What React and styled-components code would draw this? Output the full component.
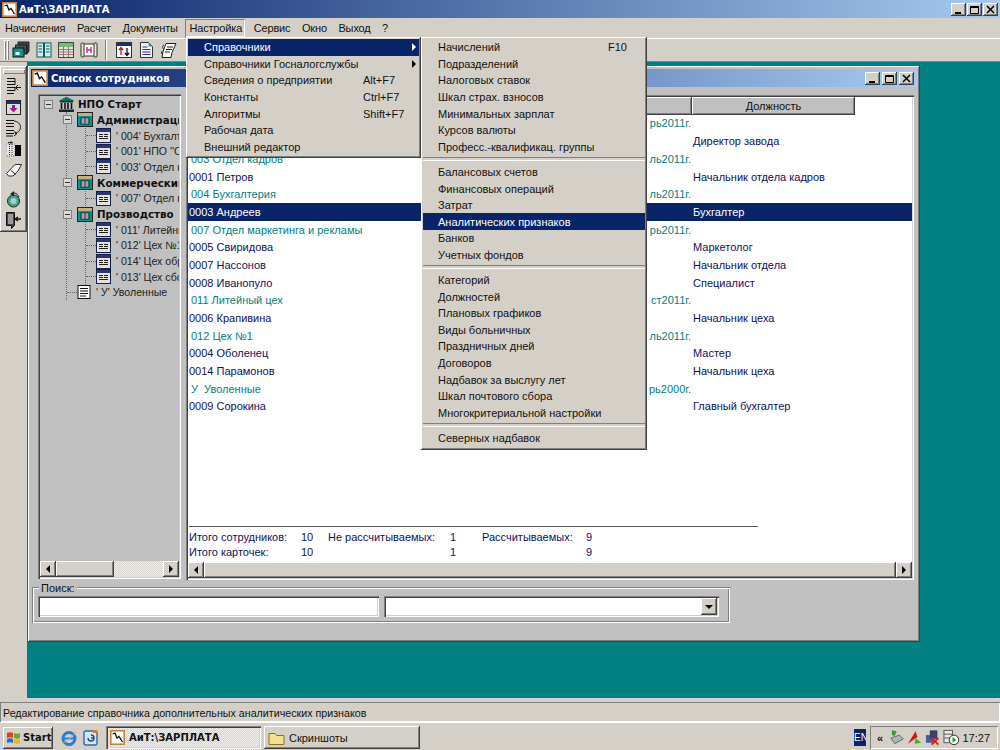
import React from "react";
import styled, { createGlobalStyle, css } from "styled-components";

const Global = createGlobalStyle`
  html, body { margin: 0; padding: 0; background: #d4d0c8; }
  * { box-sizing: border-box; }
`;

const raised = css`
  box-shadow: inset -1px -1px 0 #404040, inset 1px 1px 0 #ffffff, inset -2px -2px 0 #808080;
`;
const sunken = css`
  box-shadow: inset 1px 1px 0 #808080, inset 2px 2px 0 #404040, inset -1px -1px 0 #ffffff, inset -2px -2px 0 #d4d0c8;
`;

const Screen = styled.div`
  position: relative;
  width: 1000px;
  height: 750px;
  overflow: hidden;
  display: flex;
  flex-direction: column;
  background: #d4d0c8;
  color: #111;
  font: 11px "Liberation Sans", Arial, sans-serif;
`;

const AppTitle = styled.div`
  height: 18px;
  flex: none;
  display: flex;
  align-items: center;
  padding: 0 2px;
  gap: 2px;
  background: linear-gradient(90deg, #0a246a, #a6caf0);
  color: #fff;
  font: bold 10px "DejaVu Sans", sans-serif;
`;
const Grow = styled.div`
  flex: 1;
`;
const CapButtons = styled.div`
  display: flex;
  gap: ${(p) => p.$gap || 1}px;
`;
const CapBtn = styled.div`
  width: 15px;
  height: 13px;
  background: #d4d0c8;
  ${raised};
  display: flex;
  align-items: center;
  justify-content: center;
`;

const MenuBar = styled.div`
  height: 20px;
  flex: none;
  display: flex;
  align-items: center;
  gap: 11.5px;
  padding-left: 5px;
  letter-spacing: -0.15px;
`;
const MenuTop = styled.div`
  line-height: 18px;
  ${(p) =>
    p.$active &&
    css`
      margin: 0 -3px 0 -4px;
      padding: 0 3px 0 4px;
      box-shadow: inset 1px 1px 0 #808080, inset -1px -1px 0 #fff;
    `}
`;

const ToolBar = styled.div`
  height: 24px;
  flex: none;
  display: flex;
  align-items: center;
  padding-left: 4px;
  border-top: 1px solid #fff;
  border-bottom: 1px solid #808080;
`;
const Grip = styled.div`
  width: 2px;
  height: 20px;
  margin-right: 1px;
  background: #d4d0c8;
  box-shadow: inset 1px 1px 0 #fff, inset -1px -1px 0 #808080;
`;
const ToolIcon = styled.div`
  width: 22.6px;
  height: 20px;
  display: flex;
  align-items: center;
  justify-content: center;
`;
const ToolSep = styled.div`
  width: 2px;
  height: 20px;
  margin: 0 5px;
  border-left: 1px solid #808080;
  border-right: 1px solid #fff;
`;

const Main = styled.div`
  flex: 1;
  min-height: 0;
  display: flex;
`;
const SideBar = styled.div`
  width: 27px;
  flex: none;
  padding-top: 4px;
`;
const SideTools = styled.div`
  height: 166px;
  padding-top: 3px;
  display: flex;
  flex-direction: column;
  align-items: center;
  gap: 1px;
  ${raised};
`;
const SideGrip = styled.div`
  width: 22px;
  height: 5px;
  margin-bottom: 1px;
  box-shadow: inset 1px 1px 0 #fff, inset -1px -1px 0 #808080;
`;
const SideIcon = styled.div`
  height: 20px;
  margin-top: ${(p) => p.$mt || 0}px;
  display: flex;
  align-items: center;
  justify-content: center;
`;
const Desk = styled.div`
  flex: 1;
  background: #008080;
  padding: 4px 0 0 1px;
  border-bottom: 2px solid #c8d8d4;
`;

const Win = styled.div`
  width: 892px;
  height: 576px;
  padding: 3px;
  background: #c0c0c0;
  ${raised};
`;
const WinTitle = styled.div`
  height: 18px;
  display: flex;
  align-items: center;
  padding: 0 3px 0 1px;
  gap: 3px;
  background: linear-gradient(90deg, #0a246a, #a6caf0);
  color: #fff;
  font: bold 10px "DejaVu Sans", sans-serif;
`;
const WinBody = styled.div`
  display: flex;
  gap: 5px;
  padding: 7px 0 0 7px;
`;

const TreePanel = styled.div`
  width: 143px;
  height: 485px;
  padding: 2px;
  display: flex;
  flex-direction: column;
  ${sunken};
`;
const TreeScroll = styled.div`
  flex: 1;
  min-height: 0;
  overflow: hidden;
  padding-top: 0.4px;
`;
const TreeRow = styled.div`
  height: 15.7px;
  display: flex;
  align-items: center;
  white-space: nowrap;
  font: ${(p) => (p.$strong ? 'bold 10.3px "DejaVu Sans", sans-serif' : '10.6px "Liberation Sans", sans-serif')};
  color: ${(p) => (p.$strong ? "#111" : "#222")};
  padding-left: ${(p) => p.$pad || 0}px;
`;
const Branch = styled.div`
  margin-left: ${(p) => p.$at}px;
  border-left: 1px dotted #666;
`;
const Toggle = styled.span`
  flex: none;
  width: 9px;
  height: 9px;
  margin-left: ${(p) => p.$left || 0}px;
  margin-right: ${(p) => p.$right || 5}px;
  background: #d8d8d8;
  border: 1px solid #808080;
  display: flex;
  align-items: center;
  justify-content: center;
  &::before {
    content: "";
    width: 5px;
    height: 1px;
    background: #333;
  }
`;
const Dots = styled.span`
  flex: none;
  width: ${(p) => p.$w}px;
  border-top: 1px dotted #666;
`;
const IconGap = styled.span`
  flex: none;
  display: flex;
  margin-right: ${(p) => p.$r}px;
`;

const HScroll = styled.div`
  height: 16px;
  flex: none;
  display: flex;
  background: repeating-conic-gradient(#d4d0c8 0 25%, #f4f2ee 0 50%) 0 0 / 2px 2px;
`;
const ScrollBtn = styled.div`
  width: 16px;
  flex: none;
  background: #d4d0c8;
  ${raised};
  display: flex;
  align-items: center;
  justify-content: center;
  &::before {
    content: "";
    border-style: solid;
    border-width: 4px 0 4px 4px;
    border-color: transparent transparent transparent #000;
    ${(p) => p.$left && "transform: scaleX(-1);"}
  }
`;
const Thumb = styled.div`
  background: #d4d0c8;
  ${raised};
  ${(p) => (p.$w ? `width: ${p.$w}px; flex: none;` : "flex: 1;")}
`;
const Track = styled.div`
  flex: 1;
`;

const ListPanel = styled.div`
  width: 728px;
  height: 485px;
  margin-top: 1px;
  padding: 2px;
  display: flex;
  flex-direction: column;
  background: #fff;
  ${sunken};
`;
const Head = styled.div`
  height: 18px;
  flex: none;
  display: flex;
`;
const HeadCell = styled.div`
  width: ${(p) => p.$w}px;
  background: #c0c0c0;
  ${raised};
  display: flex;
  align-items: center;
  justify-content: center;
  color: #111;
`;
const Rows = styled.div`
  flex: 1;
  min-height: 0;
  margin-top: -0.4px;
`;
const Row = styled.div`
  height: 17.7px;
  display: grid;
  grid-template-columns: 1fr auto 219px;
  align-items: center;
  column-gap: 2px;
  white-space: pre;
  padding-left: 1px;
  color: ${(p) => (p.$sel ? "#fff" : p.$group ? "#008080" : "#101060")};
  background: ${(p) => (p.$sel ? "#0a246a" : "transparent")};
`;
const RowName = styled.span`
  padding-left: ${(p) => (p.$group ? 2 : 0)}px;
`;
const Totals = styled.div`
  flex: none;
  height: 36px;
  width: 569px;
  margin-left: 1px;
  padding-top: 2px;
  border-top: 1px solid #555;
  display: grid;
  grid-template-columns: 112px 27px 122px 32px 104px 1fr;
  grid-auto-rows: 15px;
  align-items: center;
  color: #101060;
`;

const SearchBox = styled.fieldset`
  width: 698px;
  height: 36px;
  margin: 7px 0 0 1px;
  padding: 0 9px 0 6px;
  border: none;
  box-shadow: inset 1px 1px 0 #808080, inset 2px 2px 0 #fff, inset -1px -1px 0 #fff, inset -2px -2px 0 #808080;
  display: flex;
  gap: 5px;
  position: relative;
`;
const SearchLabel = styled.div`
  position: absolute;
  left: 7px;
  top: -5px;
  padding: 0 2px;
  background: #c0c0c0;
  line-height: 12px;
`;
const SearchRow = styled.div`
  margin-top: 9px;
  display: flex;
  gap: 5px;
`;
const Field = styled.div`
  width: ${(p) => p.$w}px;
  height: 21px;
  background: #fff;
  ${sunken};
  display: flex;
  justify-content: flex-end;
  padding: 2px;
`;
const ComboBtn = styled.div`
  width: 16px;
  background: #d4d0c8;
  ${raised};
  display: flex;
  align-items: center;
  justify-content: center;
  &::before {
    content: "";
    border-style: solid;
    border-width: 4px 4px 0 4px;
    border-color: #000 transparent transparent transparent;
  }
`;

const StatusBar = styled.div`
  height: 20px;
  flex: none;
  margin-top: 2px;
  padding: 1px 0 0 3px;
  display: flex;
  align-items: center;
  font-size: 10.7px;
  box-shadow: inset 1px 1px 0 #808080, inset -1px -1px 0 #fff;
`;
const TaskBar = styled.div`
  height: 28px;
  flex: none;
  display: flex;
  align-items: center;
  padding: 2px 2px 0 3px;
  border-top: 1px solid #fff;
`;
const StartBtn = styled.div`
  width: 50px;
  height: 22px;
  display: flex;
  align-items: center;
  gap: 2px;
  padding-left: 3px;
  margin-right: 7px;
  font: bold 10px "DejaVu Sans", sans-serif;
  ${raised};
`;
const Quick = styled.div`
  display: flex;
  gap: 4px;
  margin-right: 7px;
`;
const TaskBtn = styled.div`
  width: ${(p) => p.$w}px;
  height: 23px;
  margin-right: 3px;
  display: flex;
  align-items: center;
  gap: 4px;
  padding-left: 4px;
  ${(p) =>
    p.$on
      ? css`
          font: bold 10px "DejaVu Sans", sans-serif;
          background: repeating-conic-gradient(#d4d0c8 0 25%, #f4f2ee 0 50%) 0 0 / 2px 2px;
          ${sunken};
        `
      : raised}
`;
const Lang = styled.div`
  width: 12px;
  height: 17px;
  margin-right: 4px;
  background: #0a246a;
  color: #fff;
  font-size: 10px;
  display: flex;
  align-items: center;
  overflow: hidden;
`;
const Tray = styled.div`
  width: 128px;
  height: 23px;
  display: flex;
  align-items: center;
  padding: 0 8px 0 7px;
  gap: 3px;
  box-shadow: inset 1px 1px 0 #808080, inset -1px -1px 0 #fff;
`;
const Chevron = styled.span`
  font-weight: bold;
  width: 9px;
`;
const Clock = styled.span`
  margin-left: auto;
  font-size: 11px;
`;

const Dropdown = styled.div`
  position: absolute;
  top: 37px;
  left: ${(p) => p.$left}px;
  width: ${(p) => p.$w}px;
  padding: 2px 2px ${(p) => p.$pb}px;
  background: #d4d0c8;
  ${raised};
  z-index: 5;
`;
const Item = styled.div`
  height: 16.6px;
  display: flex;
  align-items: center;
  padding-left: ${(p) => p.$pad}px;
  position: relative;
  background: ${(p) => (p.$sel ? "#0a246a" : "transparent")};
  color: ${(p) => (p.$sel ? "#fff" : "#111")};
`;
const Shortcut = styled.span`
  position: absolute;
  left: ${(p) => p.$at}px;
`;
const Arrow = styled.span`
  position: absolute;
  right: 3px;
  border-style: solid;
  border-width: 4px 0 4px 4px;
  border-color: transparent transparent transparent ${(p) => (p.$sel ? "#fff" : "#000")};
`;
const Divider = styled.div`
  height: 8.5px;
  display: flex;
  align-items: center;
  &::before {
    content: "";
    flex: 1;
    height: 2px;
    border-top: 1px solid #808080;
    border-bottom: 1px solid #fff;
  }
`;

/* ---------- drawings ---------- */
const AppIcon = ({ s = 15 }) => (
  <svg width={s} height={s} viewBox="0 0 15 15">
    <rect x="0.8" y="0.8" width="13.4" height="13.4" fill="#fff" stroke="#c8843c" strokeWidth="1.6" />
    <path d="M2.5 4 L5 3 L7 8 L9 6.5 L12.5 12" fill="none" stroke="#111" strokeWidth="1.3" />
  </svg>
);
const Bank = () => (
  <svg width="17" height="17" viewBox="0 0 17 17">
    <path d="M8.5 1 L16 5 L1 5 Z" fill="#0d6b6b" stroke="#073" strokeWidth=".5" />
    <rect x="2" y="5" width="13" height="1.5" fill="#222" />
    <path d="M3.5 7v6M7 7v6M10 7v6M13.5 7v6" stroke="#111" strokeWidth="1.6" />
    <rect x="1" y="13.5" width="15" height="2.5" fill="#222" />
  </svg>
);
const DeptIcon = () => (
  <svg width="16" height="15" viewBox="0 0 16 15">
    <rect x="0.5" y="0.5" width="15" height="14" fill="#109090" stroke="#222" />
    <rect x="1" y="1" width="14" height="3" fill="#c8b078" />
    <rect x="4" y="6" width="8" height="6" fill="#fff" stroke="#123" />
    <path d="M4 8h8M4 10h8M8 6v6" stroke="#123" strokeWidth=".8" />
  </svg>
);
const DocIcon = () => (
  <svg width="15" height="15" viewBox="0 0 15 15">
    <rect x="0.5" y="0.5" width="14" height="14" fill="#e4e4dc" stroke="#15204a" />
    <rect x="1" y="1" width="13" height="3" fill="#283870" />
    <path d="M3 6.5h4M8 6.5h4M3 8.5h4M8 8.5h4M3 10.5h9" stroke="#222" />
  </svg>
);
const ListIcon = () => (
  <svg width="14" height="14" viewBox="0 0 14 14">
    <rect x="1" y="0.5" width="12" height="13" fill="#fff" stroke="#111" />
    <path d="M3 3.5h8M3 6h8M3 8.5h8M3 11h6" stroke="#111" />
  </svg>
);
const TB = {
  stack: (
    <svg width="18" height="18" viewBox="0 0 18 18">
      <path d="M6 1h11v9l-2 3V4H6z" fill="#444" stroke="#222" />
      <rect x="3.5" y="4" width="11" height="9" fill="#3a5a5a" stroke="#222" />
      <rect x="1" y="7" width="11" height="9" fill="#1f8a8a" stroke="#111" />
      <rect x="3.5" y="11" width="4" height="3" fill="#cfe" />
    </svg>
  ),
  book: (
    <svg width="16" height="16" viewBox="0 0 16 16">
      <rect x="1" y="1" width="6.5" height="14" fill="#d0eeee" stroke="#0a5a5a" />
      <rect x="8.5" y="1" width="6.5" height="14" fill="#d0eeee" stroke="#0a5a5a" />
      <path d="M2.5 4h3.5M2.5 7h3.5M2.5 10h3.5M10 4h3.5M10 7h3.5M10 10h3.5" stroke="#246" />
    </svg>
  ),
  sheet: (
    <svg width="16" height="16" viewBox="0 0 16 16">
      <rect x="0.5" y="0.5" width="15" height="15" fill="#e8e4dc" stroke="#444" />
      <rect x="1" y="1" width="14" height="4" fill="#7ab87a" />
      <path d="M1 7.5h14M1 10h14M1 12.5h14" stroke="#a07878" />
      <path d="M5.5 5v10M10.5 5v10" stroke="#807878" />
    </svg>
  ),
  scroll: (
    <svg width="18" height="16" viewBox="0 0 18 16">
      <rect x="3" y="2" width="12" height="12" fill="#fff" stroke="#333" />
      <rect x="1" y="1" width="3" height="14" rx="1" fill="#f0e8c8" stroke="#333" />
      <rect x="14" y="1" width="3" height="14" rx="1" fill="#f0e8c8" stroke="#333" />
      <path d="M7 5v6M11 5v6M7 8h4" stroke="#d0208a" strokeWidth="1.4" />
    </svg>
  ),
  sort: (
    <svg width="16" height="16" viewBox="0 0 16 16">
      <rect x="0.5" y="0.5" width="15" height="15" fill="#fff" stroke="#333" />
      <rect x="1" y="1" width="14" height="3" fill="#14308a" />
      <path d="M5 13V6M3 8l2-2.5L7 8" fill="none" stroke="#c01818" strokeWidth="1.3" />
      <path d="M11 6v7M9 11l2 2.5 2-2.5" fill="none" stroke="#111" strokeWidth="1.3" />
    </svg>
  ),
  page: (
    <svg width="15" height="16" viewBox="0 0 15 16">
      <path d="M1.5.5h8l4 4v11h-12z" fill="#f4f4f4" stroke="#333" />
      <path d="M9.5.5v4h4z" fill="#3a9a9a" />
      <path d="M3.5 5h5M3.5 7.5h8M3.5 10h8M3.5 12.5h8" stroke="#2a2a9a" strokeWidth="1.2" />
      <path d="M3.5 7.5h2M3.5 12.5h2" stroke="#c02070" strokeWidth="1.2" />
    </svg>
  ),
  note: (
    <svg width="17" height="17" viewBox="0 0 17 17">
      <path d="M6 1.5h10l-4 9-1 5H2l1-6z" fill="#fff" stroke="#222" />
      <path d="M7 5h6M6 7.5h6M5 10h5" stroke="#222" />
      <path d="M4 3c-2 1-2 3 0 4M2.5 9c-1.5 1-1 3 .5 4" fill="none" stroke="#222" />
    </svg>
  ),
};
const SIDE = [
  <svg key="a" width="16" height="18" viewBox="0 0 16 18">
    <path d="M1 1.5h8M1 4.5h8M1 7.5h8M1 10.5h8M1 13.5h8M1 16.5h7M9 1.5v6M9 10.5v3" stroke="#111" fill="none" />
    <path d="M10 10.5h5M12 8l-2.5 2.5L12 13" stroke="#111" fill="none" />
  </svg>,
  <svg key="b" width="15" height="15" viewBox="0 0 15 15">
    <rect x="0.5" y="0.5" width="14" height="14" fill="#cfe6cf" stroke="#222" />
    <rect x="1" y="1" width="13" height="3" fill="#14308a" />
    <path d="M6 5h3v3h2.5L7.5 12.5 3.5 8H6z" fill="#b01090" />
  </svg>,
  <svg key="c" width="17" height="18" viewBox="0 0 17 18">
    <path d="M1 1.5h8M1 4.5h8M1 7.5h8M1 11.5h8M1 14.5h8M1 17h7" stroke="#111" fill="none" />
    <path d="M9 2c8 1 9 10 1 12.5M9 12.5l3 2-3 2.5" stroke="#111" fill="none" />
  </svg>,
  <svg key="d" width="16" height="16" viewBox="0 0 16 16">
    <rect x="0" y="3" width="9" height="12" fill="#e4e4e4" stroke="#777" strokeDasharray="1 1" />
    <path d="M3.5 3v12M6 3v12" stroke="#333" strokeDasharray="1 1" />
    <rect x="9" y="4" width="6" height="11" fill="#000" />
    <path d="M5 0v3M7 1.5H2" stroke="#333" />
  </svg>,
  <svg key="e" width="18" height="14" viewBox="0 0 18 14">
    <path d="M1.5 10.5L10 1.5h6.5L13 8l-5 5H3.5z" fill="#f4f4f4" stroke="#333" />
    <path d="M6 7.5l5 4" stroke="#333" />
  </svg>,
  <svg key="f" width="15" height="18" viewBox="0 0 15 18">
    <circle cx="7.5" cy="11" r="6" fill="#3aa88a" stroke="#222" />
    <circle cx="7.5" cy="11" r="3" fill="#b8c8d0" />
    <path d="M4 4l4-3v5z" fill="#222" />
    <path d="M8 3c3 0 4 2 5 4" fill="none" stroke="#222" />
  </svg>,
  <svg key="g" width="17" height="18" viewBox="0 0 17 18">
    <path d="M1.5 1.5h8v13l-3 3v-3h-5z" fill="#444" stroke="#111" />
    <path d="M3 3h5v10H3z" fill="#999" />
    <path d="M16 8h-5M13 6l-3 2 3 2" stroke="#111" fill="none" strokeWidth="1.3" />
  </svg>,
];
const WinLogo = () => (
  <svg width="15" height="15" viewBox="0 0 15 15">
    <path d="M1 3c2-1 4-1 6 0v5c-2-1-4-1-6 0z" fill="#d8431e" />
    <path d="M8 3c2 1 4 1 6 0v5c-2 1-4 1-6 0z" fill="#6aa82a" />
    <path d="M1 9c2-1 4-1 6 0v4c-2-1-4-1-6 0z" fill="#2a6ad8" />
    <path d="M8 9c2 1 4 1 6 0v4c-2 1-4 1-6 0z" fill="#e8b818" />
  </svg>
);
const IeIcon = () => (
  <svg width="18" height="18" viewBox="0 0 18 18">
    <circle cx="9" cy="9.5" r="6" fill="none" stroke="#2a7ae0" strokeWidth="3" />
    <path d="M4 9.5h10" stroke="#2a7ae0" strokeWidth="2" />
    <path d="M2 14c3 0 10-6 14-11" stroke="#e8b818" fill="none" />
  </svg>
);
const DeskIcon = () => (
  <svg width="17" height="18" viewBox="0 0 17 18">
    <rect x="2" y="2" width="13" height="14" rx="2" fill="#d8e6f4" stroke="#2a6ab0" strokeWidth="1.4" />
    <path d="M6 9a3 3 0 1 0 3-3M9 9h3" fill="none" stroke="#1a4a9a" strokeWidth="1.4" />
    <rect x="11" y="1" width="4" height="3" fill="#e07818" />
  </svg>
);
const FolderIcon = () => (
  <svg width="17" height="14" viewBox="0 0 17 14">
    <path d="M1 2.5h6l1.5 2h7.5v9H1z" fill="#f4e08a" stroke="#8a7020" />
  </svg>
);
const TrayNet = () => (
  <svg width="16" height="17" viewBox="0 0 16 17">
    <path d="M3 1l5 1-2 5-3-1z" fill="#3a9a3a" />
    <path d="M2 9l9-3 4 4-9 5z" fill="#aab4b0" stroke="#333" strokeWidth=".6" />
  </svg>
);
const TrayRed = () => (
  <svg width="16" height="15" viewBox="0 0 16 15">
    <path d="M1 14L9 1l2 6z" fill="#e01010" />
    <path d="M9 8l6 5-7 1z" fill="#2ac02a" />
  </svg>
);
const TrayX = () => (
  <svg width="16" height="17" viewBox="0 0 16 17">
    <rect x="1" y="6" width="8" height="8" fill="#4a5a9a" />
    <rect x="5" y="1" width="8" height="9" fill="#39406a" />
    <path d="M7 9l7 7M14 9l-7 7" stroke="#e01818" strokeWidth="2" />
  </svg>
);
const TrayPlay = () => (
  <svg width="17" height="17" viewBox="0 0 17 17">
    <rect x="1" y="1" width="9" height="13" fill="#e8e8e8" stroke="#555" />
    <path d="M1 5h9M1 9h9" stroke="#555" />
    <circle cx="11.5" cy="11" r="5" fill="#fff" stroke="#222" />
    <path d="M10 8l4 3-4 3z" fill="#18a018" />
  </svg>
);

const Caption = ({ gap }) => (
  <CapButtons $gap={gap}>
    <CapBtn>
      <svg width="9" height="9" viewBox="0 0 9 9"><rect x="1" y="7" width="6" height="2" fill="#000" /></svg>
    </CapBtn>
    <CapBtn>
      <svg width="9" height="9" viewBox="0 0 9 9"><path d="M.5 1.5h8v7h-8zM.5 2.5h8" fill="none" stroke="#000" /></svg>
    </CapBtn>
    <CapBtn>
      <svg width="9" height="9" viewBox="0 0 9 9"><path d="M1 1l7 7M8 1l-7 7" stroke="#000" strokeWidth="1.5" /></svg>
    </CapBtn>
  </CapButtons>
);

/* ---------- data ---------- */
const topMenu = ["Начисления", "Расчет", "Документы", "Настройка", "Сервис", "Окно", "Выход", "?"];
const menu1 = [
  { t: "Справочники", arrow: true, sel: true },
  { t: "Справочники Госналогслужбы", arrow: true },
  { t: "Сведения о предприятии", k: "Alt+F7" },
  { t: "Константы", k: "Ctrl+F7" },
  { t: "Алгоритмы", k: "Shift+F7" },
  { t: "Рабочая дата" },
  { t: "Внешний редактор" },
];
const menu2 = [
  [{ t: "Начислений", k: "F10" }, { t: "Подразделений" }, { t: "Налоговых ставок" }, { t: "Шкал страх. взносов" }, { t: "Минимальных зарплат" }, { t: "Курсов валюты" }, { t: "Професс.-квалификац. группы" }],
  [{ t: "Балансовых счетов" }, { t: "Финансовых операций" }, { t: "Затрат" }, { t: "Аналитических признаков", sel: true }, { t: "Банков" }, { t: "Учетных фондов" }],
  [{ t: "Категорий" }, { t: "Должностей" }, { t: "Плановых графиков" }, { t: "Виды больничных" }, { t: "Праздничных дней" }, { t: "Договоров" }, { t: "Надбавок за выслугу лет" }, { t: "Шкал почтового сбора" }, { t: "Многокритериальной настройки" }],
  [{ t: "Северных надбавок" }],
];
const rows = [
  { date: "рь2011г.", group: true },
  { pos: "Директор завода" },
  { name: "003 Отдел кадров", date: "ль2011г.", group: true },
  { name: "0001 Петров", pos: "Начальник отдела кадров" },
  { name: "004 Бухгалтерия", date: "ль2011г.", group: true },
  { name: "0003 Андреев", pos: "Бухгалтер", sel: true },
  { name: "007 Отдел маркетинга и рекламы", date: "рь2011г.", group: true },
  { name: "0005 Свиридова", pos: "Маркетолог" },
  { name: "0007 Нассонов", pos: "Начальник отдела" },
  { name: "0008 Иванопуло", pos: "Специалист" },
  { name: "011 Литейный цех", date: "ст2011г.", group: true },
  { name: "0006 Крапивина", pos: "Начальник цеха" },
  { name: "012 Цех №1", date: "ль2011г.", group: true },
  { name: "0004 Оболенец", pos: "Мастер" },
  { name: "0014 Парамонов", pos: "Начальник цеха" },
  { name: "У  Уволенные", date: "рь2000г.", group: true },
  { name: "0009 Сорокина", pos: "Главный бухгалтер" },
];
const tree = [
  { t: "Администрация", kids: ["' 004' Бухгалтерия", "' 001' НПО ''Старт''", "' 003' Отдел кадров"] },
  { t: "Коммерческий", kids: ["' 007' Отдел маркетинга"] },
  { t: "Прозводство", kids: ["' 011' Литейный цех", "' 012' Цех №1", "' 014' Цех обработки", "' 013' Цех сборки"] },
];
const totals = ["Итого сотрудников:", "10", "Не рассчитываемых:", "1", "Рассчитываемых:", "9", "Итого карточек:", "10", "", "1", "", "9"];

const MenuList = ({ items, pad, at }) =>
  items.map((m) => (
    <Item key={m.t} $sel={m.sel} $pad={pad}>
      {m.t}
      {m.k && <Shortcut $at={at}>{m.k}</Shortcut>}
      {m.arrow && <Arrow $sel={m.sel} />}
    </Item>
  ));

export default function App() {
  return (
    <Screen>
      <Global />
      <AppTitle>
        <AppIcon />
        АиТ:\ЗАРПЛАТА
        <Grow />
        <Caption gap={1} />
      </AppTitle>
      <MenuBar>
        {topMenu.map((m) => (
          <MenuTop key={m} $active={m === "Настройка"}>{m}</MenuTop>
        ))}
      </MenuBar>
      <ToolBar>
        <Grip />
        <Grip />
        <ToolIcon>{TB.stack}</ToolIcon>
        <ToolIcon>{TB.book}</ToolIcon>
        <ToolIcon>{TB.sheet}</ToolIcon>
        <ToolIcon>{TB.scroll}</ToolIcon>
        <ToolSep />
        <ToolIcon>{TB.sort}</ToolIcon>
        <ToolIcon>{TB.page}</ToolIcon>
        <ToolIcon>{TB.note}</ToolIcon>
      </ToolBar>
      <Main>
        <SideBar>
          <SideTools>
            <SideGrip />
            {SIDE.map((s, i) => (
              <SideIcon key={i} $mt={i === 5 ? 8 : 0}>{s}</SideIcon>
            ))}
          </SideTools>
        </SideBar>
        <Desk>
          <Win>
            <WinTitle>
              <AppIcon s={16} />
              Список сотрудников
              <Grow />
              <Caption gap={2} />
            </WinTitle>
            <WinBody>
              <TreePanel>
                <TreeScroll>
                  <TreeRow $strong $pad={4}>
                    <Toggle />
                    <IconGap $r={3}><Bank /></IconGap>
                    НПО Старт
                  </TreeRow>
                  <Branch $at={26}>
                    {tree.map((g) => (
                      <React.Fragment key={g.t}>
                        <TreeRow $strong>
                          <Toggle $left={-4} $right={5} />
                          <IconGap $r={4}><DeptIcon /></IconGap>
                          {g.t}
                        </TreeRow>
                        <Branch $at={18}>
                          {g.kids.map((k) => (
                            <TreeRow key={k}>
                              <Dots $w={10} />
                              <IconGap $r={5}><DocIcon /></IconGap>
                              {k}
                            </TreeRow>
                          ))}
                        </Branch>
                      </React.Fragment>
                    ))}
                    <TreeRow>
                      <Dots $w={10} />
                      <IconGap $r={5}><ListIcon /></IconGap>
                      ' У' Уволенные
                    </TreeRow>
                  </Branch>
                </TreeScroll>
                <HScroll>
                  <ScrollBtn $left />
                  <Thumb $w={58} />
                  <Track />
                  <ScrollBtn />
                </HScroll>
              </TreePanel>
              <ListPanel>
                <Head>
                  <HeadCell $w={504} />
                  <HeadCell $w={163}>Должность</HeadCell>
                </Head>
                <Rows>
                  {rows.map((r, i) => (
                    <Row key={i} $sel={r.sel} $group={r.group}>
                      <RowName $group={r.group}>{r.name || ""}</RowName>
                      <span>{r.date || ""}</span>
                      <span>{r.pos || ""}</span>
                    </Row>
                  ))}
                </Rows>
                <Totals>
                  {totals.map((t, i) => (
                    <span key={i}>{t}</span>
                  ))}
                </Totals>
                <HScroll>
                  <ScrollBtn $left />
                  <Thumb />
                  <ScrollBtn />
                </HScroll>
              </ListPanel>
            </WinBody>
            <SearchBox>
              <SearchLabel>Поиск:</SearchLabel>
              <SearchRow>
                <Field $w={341} />
                <Field $w={335}><ComboBtn /></Field>
              </SearchRow>
            </SearchBox>
          </Win>
        </Desk>
      </Main>
      <StatusBar>Редактирование справочника дополнительных аналитических признаков</StatusBar>
      <TaskBar>
        <StartBtn><WinLogo />Start</StartBtn>
        <Quick>
          <IeIcon />
          <DeskIcon />
        </Quick>
        <TaskBtn $w={155} $on><AppIcon />АиТ:\ЗАРПЛАТА</TaskBtn>
        <TaskBtn $w={156}><FolderIcon />Скриншоты</TaskBtn>
        <Grow />
        <Lang>EN</Lang>
        <Tray>
          <Chevron>«</Chevron>
          <TrayNet />
          <TrayRed />
          <TrayX />
          <TrayPlay />
          <Clock>17:27</Clock>
        </Tray>
      </TaskBar>
      <Dropdown $left={186} $w={235} $pb={3}>
        <MenuList items={menu1} pad={16} at={175} />
      </Dropdown>
      <Dropdown $left={421} $w={226} $pb={4}>
        {menu2.map((group, i) => (
          <React.Fragment key={i}>
            {i > 0 && <Divider />}
            <MenuList items={group} pad={15} at={185} />
          </React.Fragment>
        ))}
      </Dropdown>
    </Screen>
  );
}
